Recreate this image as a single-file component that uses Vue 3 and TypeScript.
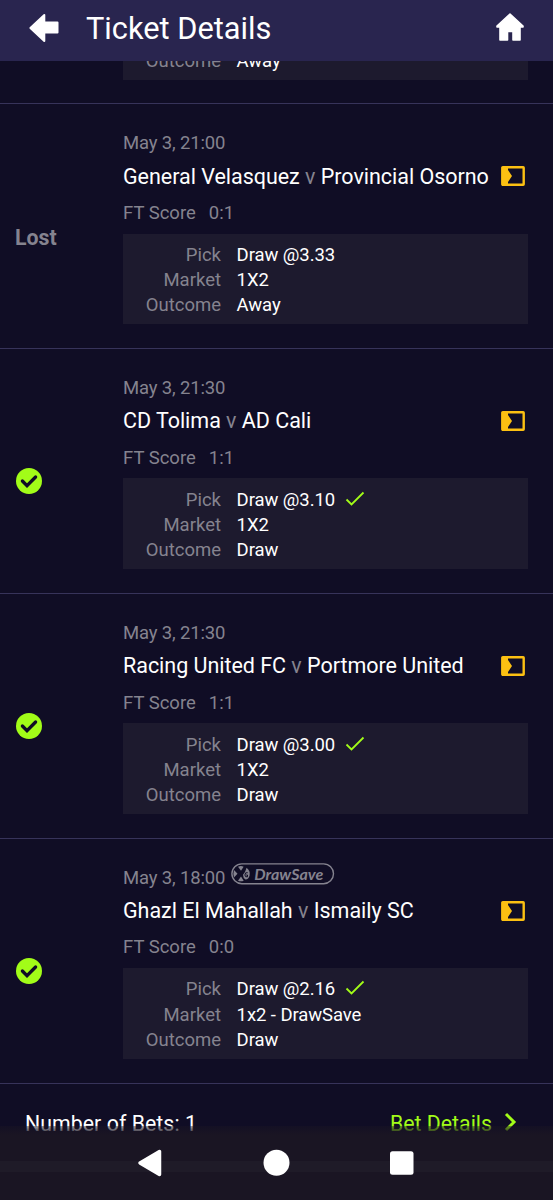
<script setup lang="ts">
interface Row {
  label: string
  value: string
  hit?: boolean
}
interface Bet {
  won: boolean
  time: string
  home: string
  away: string
  score: string
  drawSave?: boolean
  rows: Row[]
}

function rows(pick: string, market: string, outcome: string, hit: boolean): Row[] {
  return [
    { label: 'Pick', value: pick, hit },
    { label: 'Market', value: market },
    { label: 'Outcome', value: outcome },
  ]
}

const bets: Bet[] = [
  { won: false, time: 'May 3, 21:00', home: 'General Velasquez', away: 'Provincial Osorno', score: '0:1', rows: rows('Draw @3.33', '1X2', 'Away', false) },
  { won: true, time: 'May 3, 21:30', home: 'CD Tolima', away: 'AD Cali', score: '1:1', rows: rows('Draw @3.10', '1X2', 'Draw', true) },
  { won: true, time: 'May 3, 21:30', home: 'Racing United FC', away: 'Portmore United', score: '1:1', rows: rows('Draw @3.00', '1X2', 'Draw', true) },
  { won: true, time: 'May 3, 18:00', home: 'Ghazl El Mahallah', away: 'Ismaily SC', score: '0:0', drawSave: true, rows: rows('Draw @2.16', '1x2 - DrawSave', 'Draw', true) },
]
</script>

<template>
  <div class="screen">
    <header class="bar">
      <svg class="back" width="32" height="30" viewBox="0 0 32 30">
        <path d="M2.400 15 L16.300 2 V9.500 H29.500 V19.500 H16.300 V28 Z" fill="#fff" stroke="#fff" stroke-width="2" stroke-linejoin="round" />
      </svg>
      <h1>Ticket Details</h1>
      <svg class="home" width="30" height="30" viewBox="0 0 30 30">
        <path d="M15 2 L28 14 V15 H25 V28 H18 V19.500 H12.500 V28 H5 V15 H2 V14 Z" fill="#fff" stroke="#fff" stroke-width="1.600" stroke-linejoin="round" />
      </svg>
    </header>

    <main class="list">
      <section class="bet tail">
        <div class="details">
          <div class="row"><span class="label">Outcome</span><span class="value">Away</span></div>
        </div>
      </section>

      <section v-for="bet in bets" :key="bet.home" class="bet">
        <div class="status">
          <svg v-if="bet.won" width="26" height="26" viewBox="0 0 26 26">
            <circle cx="13" cy="13" r="13" fill="#a2fc18" />
            <path d="M6.400 13 L11 17.600 L19.600 9" fill="none" stroke="#100d25" stroke-width="3.300" stroke-linecap="round" stroke-linejoin="miter" />
          </svg>
          <span v-else class="lost">Lost</span>
        </div>
        <div class="info">
          <div class="time">
            <span class="when">{{ bet.time }}</span>
            <svg v-if="bet.drawSave" class="badge" width="104" height="22" viewBox="0 0 104 22">
              <rect x=".9" y=".9" width="101.600" height="19.800" rx="9.900" fill="none" stroke="#85838f" stroke-width="1.400" />
              <g fill="#85838f">
                <path d="M7 3.800 Q10 2.400 12.600 3.800 L10 7.700 Z" />
                <path d="M3 7 L6.500 10.800 L3 14.600 Q1.800 10.800 3 7 Z" />
                <path d="M7 17.700 L10 13.500 L12.700 17.700 Q10 19 7 17.700 Z" />
                <path d="M15.600 4.700 Q19.600 8 18.600 12.500 Q17.500 16.500 14.500 16.500 Q12 15.200 12 11.800 Q14.500 8.800 15.600 4.700 Z" />
              </g>
              <path d="M16.700 9.700 Q14 8.900 13.900 12 Q14.100 14.500 16.500 13.800 V12 H15.200" fill="none" stroke="#100d25" stroke-width="1" />
              <text x="23.300" y="16.500" textLength="69" lengthAdjust="spacingAndGlyphs">DrawSave</text>
            </svg>
          </div>
          <div class="teams">
            <span>{{ bet.home }} <i>v</i> {{ bet.away }}</span>
            <svg class="video" width="24" height="20" viewBox="0 0 24 20">
              <rect x="1.300" y="1.300" width="21.400" height="17.400" rx=".5" fill="none" stroke="#fcc012" stroke-width="2.400" />
              <path d="M1 1 H7 V4 L11 10 L7 16 V19 H1 Z" fill="#fcc012" />
            </svg>
          </div>
          <div class="score"><span>FT Score</span><span>{{ bet.score }}</span></div>
          <div class="details">
            <div v-for="row in bet.rows" :key="row.label" class="row">
              <span class="label">{{ row.label }}</span>
              <span class="value">{{ row.value }}</span>
              <svg v-if="row.hit" class="hit" width="20" height="16" viewBox="0 0 20 16">
                <path d="M1.500 8.500 L6.500 13.500 L18.500 1.500" fill="none" stroke="#a2fc18" stroke-width="1.800" />
              </svg>
            </div>
          </div>
        </div>
      </section>

      <footer class="summary">
        <span class="count">Number of Bets: 1</span>
        <span class="more">Bet Details</span>
        <svg width="13" height="20" viewBox="0 0 13 20">
          <path d="M2 2 L10 10 L2 18" fill="none" stroke="#a2fc18" stroke-width="3" />
        </svg>
      </footer>
    </main>

    <nav class="system">
      <div class="strip"></div>
      <svg width="553" height="74" viewBox="0 0 553 74">
        <path d="M140 37 L159.500 25.500 V48.500 Z" fill="#fff" stroke="#fff" stroke-width="3.500" stroke-linejoin="round" />
        <circle cx="276.500" cy="36.800" r="13" fill="#fff" />
        <rect x="390" y="25.300" width="23.500" height="23.500" rx="2.500" fill="#fff" />
      </svg>
    </nav>
  </div>
</template>

<style>
body {
  background: #100d25;
}
</style>

<style scoped>
.screen {
  width: 553px;
  height: 1200px;
  position: relative;
  overflow: hidden;
  display: flex;
  flex-direction: column;
  background: #100d25;
  color: #fff;
  font-family: Roboto, "Liberation Sans", sans-serif;
}
.bar {
  height: 60.500px;
  flex: none;
  box-sizing: border-box;
  background: #29254f;
  display: flex;
  align-items: center;
  padding: 0 28px 5px;
}
.back {
  flex: none;
}
h1 {
  flex: 1;
  margin: 2px 0 0 26px;
  font-size: 30.750px;
  font-weight: 400;
  line-height: 36px;
}
.home {
  margin-top: -2px;
}
.list {
  flex: 1;
  min-height: 0;
  overflow: hidden;
}
.bet {
  height: 244.880px;
  box-sizing: border-box;
  border-bottom: 1px solid #37335a;
  display: flex;
  padding-right: 25px;
}
.tail {
  height: 43.500px;
  align-items: flex-end;
  padding: 0 25px 23.500px 123px;
}
.tail .details {
  flex: 1;
  padding-bottom: 6px;
}
.status {
  width: 123px;
  flex: none;
  box-sizing: border-box;
  padding: 20px 0 0 16px;
  display: flex;
  align-items: center;
}
.lost {
  margin: 3px 0 0 -1px;
  color: #85838f;
  font-size: 21.300px;
  font-weight: 700;
}
.info {
  flex: 1;
  min-width: 0;
  padding-top: 25px;
}
.time {
  height: 27px;
  display: flex;
  align-items: center;
  color: #85838f;
  font-size: 18.500px;
}
.when {
  padding-top: 1px;
  letter-spacing: -0.160px;
}
.badge {
  margin: -6px 0 0 6px;
}
.badge text {
  fill: #85838f;
  font: italic 700 14.500px Lato, sans-serif;
}
.teams {
  height: 40px;
  display: flex;
  align-items: center;
  justify-content: space-between;
  font-size: 21.500px;
  letter-spacing: -0.030px;
  white-space: nowrap;
}
.teams i {
  font-style: normal;
  color: #85838f;
}
.video {
  flex: none;
  margin-right: 3.500px;
}
.score {
  height: 37.500px;
  display: flex;
  align-items: center;
  gap: 13px;
  padding-bottom: 4px;
  box-sizing: border-box;
  color: #85838f;
  font-size: 18.500px;
}
.details {
  background: #1d1a2e;
  padding: 8.700px 0 6.400px;
}
.row {
  height: 25.300px;
  display: flex;
  align-items: center;
  font-size: 18.500px;
}
.label {
  width: 98px;
  margin-right: 15.600px;
  text-align: right;
  color: #85838f;
}
.value {
  letter-spacing: -0.080px;
}
.hit {
  margin: -2px 0 0 9.500px;
}
.summary {
  display: flex;
  align-items: center;
  height: 79px;
  padding: 0 36px 0 25px;
  font-size: 21.300px;
}
.count {
  flex: 1;
  letter-spacing: 0.050px;
}
.more {
  color: #a2fc18;
}
.summary svg {
  margin: -3px 0 0 12px;
}
.system {
  position: absolute;
  left: 0;
  right: 0;
  bottom: 0;
  height: 74px;
  background: linear-gradient(rgba(26, 21, 35, 0.4), #1a1523 9px);
}
.strip {
  position: absolute;
  top: 35px;
  left: 0;
  right: 0;
  height: 11px;
  background: #1f1b28;
}
.system svg {
  position: absolute;
  inset: 0;
}
</style>
